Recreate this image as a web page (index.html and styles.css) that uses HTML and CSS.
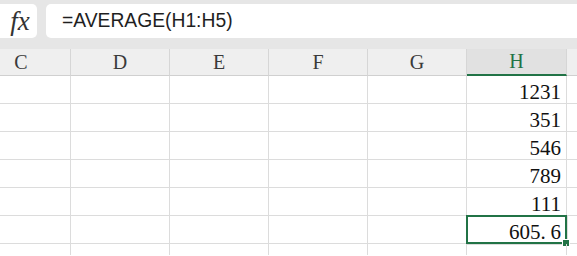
FILE: index.html
```html
<!DOCTYPE html>
<html lang="en">
<head>
    <meta charset="UTF-8">
    <title>Sheet</title>
    <link rel="stylesheet" href="styles.css">
</head>
<body>
    <div class="formula-bar">
        <div class="fx-box">fx</div>
        <div class="formula-input">=AVERAGE(H1:H5)</div>
    </div>
    <div class="sheet">
        <div class="col-head">C</div>
        <div class="col-head">D</div>
        <div class="col-head">E</div>
        <div class="col-head">F</div>
        <div class="col-head">G</div>
        <div class="col-head active">H</div>
        <div class="col-head rest"></div>

        <div class="cell"></div><div class="cell"></div><div class="cell"></div><div class="cell"></div><div class="cell"></div><div class="cell num">1231</div><div class="cell rest"></div>
        <div class="cell"></div><div class="cell"></div><div class="cell"></div><div class="cell"></div><div class="cell"></div><div class="cell num">351</div><div class="cell rest"></div>
        <div class="cell"></div><div class="cell"></div><div class="cell"></div><div class="cell"></div><div class="cell"></div><div class="cell num">546</div><div class="cell rest"></div>
        <div class="cell"></div><div class="cell"></div><div class="cell"></div><div class="cell"></div><div class="cell"></div><div class="cell num">789</div><div class="cell rest"></div>
        <div class="cell"></div><div class="cell"></div><div class="cell"></div><div class="cell"></div><div class="cell"></div><div class="cell num">111</div><div class="cell rest"></div>
        <div class="cell"></div><div class="cell"></div><div class="cell"></div><div class="cell"></div><div class="cell"></div><div class="cell num selected">605<span class="dot">.</span>6<span class="handle"></span></div><div class="cell rest"></div>
        <div class="cell"></div><div class="cell"></div><div class="cell"></div><div class="cell"></div><div class="cell"></div><div class="cell num"></div><div class="cell rest"></div>
    </div>
</body>
</html>
```

FILE: styles.css
```css
:root {
    --bar-bg: #e6e6e6;
    --head-bg: #efefef;
    --head-active: #e1e1e1;
    --grid-line: #dcdcdc;
    --green: #217346;
}

body {
    margin: 0;
    width: 577px;
    height: 256px;
    overflow: hidden;
    background: white;
}

.formula-bar {
    display: flex;
    gap: 9px;
    background-color: var(--bar-bg);
    padding: 4px 0 11px 0;
    height: 34px;
}
.fx-box {
    width: 37px;
    background: white;
    border-radius: 0 5px 5px 0;
    font-family: "Liberation Serif", serif;
    font-style: italic;
    font-size: 27px;
    color: #333;
    display: flex;
    align-items: center;
    justify-content: center;
    padding-left: 3px;
    box-sizing: border-box;
    line-height: 1;
}
.formula-input {
    flex: 1;
    background: white;
    border-radius: 5px 0 0 5px;
    font-family: "Liberation Sans", Arial, sans-serif;
    font-size: 19.3px;
    color: #1f1f1f;
    padding-left: 16px;
    display: flex;
    align-items: center;
}

.sheet {
    display: grid;
    grid-template-columns: 71px 99px 99px 99px 99px 100px 1fr;
    grid-auto-rows: 28px;
    grid-template-rows: 27px;
    height: 206px;
    overflow: hidden;
}
.col-head {
    background-color: var(--head-bg);
    border-right: 1px solid #d6d6d6;
    border-bottom: 1px solid #d0d0d0;
    font-family: "Liberation Serif", serif;
    font-size: 20px;
    color: #3a3a3a;
    display: flex;
    align-items: flex-end;
    justify-content: center;
    padding-bottom: 1px;
    box-sizing: border-box;
}
.col-head:first-child {
    padding-right: 28px;
}
.col-head.rest {
    border-right: none;
}
.col-head.active {
    background-color: var(--head-active);
    color: var(--green);
    border-bottom: 2px solid var(--green);
}
.cell {
    border-right: 1px solid var(--grid-line);
    border-bottom: 1px solid var(--grid-line);
    box-sizing: border-box;
}
.cell.rest {
    border-right: none;
}
.num {
    font-family: "Liberation Serif", serif;
    font-size: 21px;
    color: #111;
    text-align: right;
    padding-right: 5px;
    line-height: 33px;
    position: relative;
}
.num.selected {
    box-shadow: inset 0 0 0 2px var(--green);
    margin: -1px;
    padding-right: 6px;
    line-height: 35px;
}
.dot {
    display: inline-block;
    width: 10px;
    text-align: left;
}
.handle {
    position: absolute;
    right: -3px;
    bottom: -3px;
    width: 6px;
    height: 6px;
    background: var(--green);
    border: 1px solid white;
}
```
